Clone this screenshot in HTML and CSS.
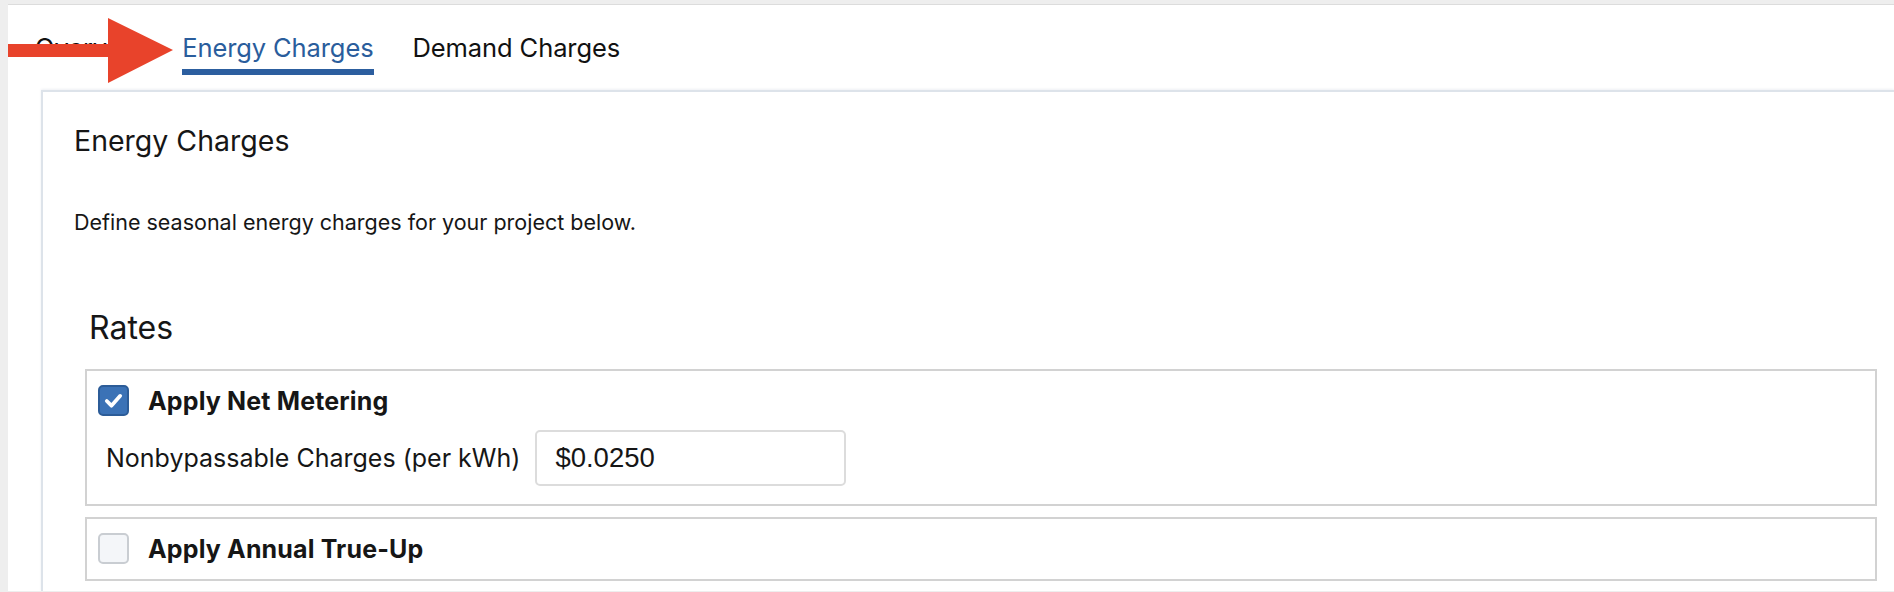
FILE: index.html
```html
<!DOCTYPE html>
<html>
<head>
<meta charset="utf-8">
<link rel="stylesheet" href="styles.css">
</head>
<body>
<div class="window">
  <nav class="tabs">
    <span class="tab">Overview</span>
    <span class="tab active">Energy Charges</span>
    <span class="tab">Demand Charges</span>
  </nav>
  <section class="panel">
    <h2 class="panel-title">Energy Charges</h2>
    <p class="panel-desc">Define seasonal energy charges for your project below.</p>
    <div class="rates">
      <h3 class="rates-title">Rates</h3>
      <div class="rate-box first">
        <div class="check-row">
          <span class="checkbox checked">
            <svg viewBox="0 0 30 30" width="30" height="30"><path d="M8.5 15.5 L13 20 L21.5 10.5" fill="none" stroke="#fff" stroke-width="3.6" stroke-linecap="round" stroke-linejoin="round"/></svg>
          </span>
          <span class="check-label">Apply Net Metering</span>
        </div>
        <div class="field-row">
          <label class="field-label">Nonbypassable Charges (per kWh)</label>
          <div class="input">$0.0250</div>
        </div>
      </div>
      <div class="rate-box">
        <div class="check-row">
          <span class="checkbox"></span>
          <span class="check-label">Apply Annual True-Up</span>
        </div>
      </div>
    </div>
  </section>
</div>
<svg class="arrow" viewBox="0 0 165 65" width="165" height="65">
  <polygon points="0,26 100,26 100,0 165,32 100,65 100,39 0,39" fill="#e8432b"/>
</svg>
</body>
</html>
```

FILE: styles.css
```css
html, body {
  margin: 0;
  padding: 0;
}
body {
  background: #eeeeee;
  font-family: Inter, "Noto Sans", sans-serif;
  color: #161616;
  height: 592px;
  overflow: hidden;
  position: relative;
}
.window {
  margin: 4px 0 0 8px;
  background: #ffffff;
  border-top: 1px solid #dcdcdc;
  height: 587px;
  box-sizing: border-box;
  overflow: hidden;
  display: flex;
  flex-direction: column;
}
.tabs {
  display: flex;
  padding: 27px 0 0 27px;
  height: 58px;
  box-sizing: content-box;
  flex: none;
}
.tab {
  font-size: 25.5px;
  line-height: 32px;
  height: 37px;
  color: #111;
  letter-spacing: -0.1px;
  margin-right: 39px;
}
.tab:first-child {
  margin-right: 34px;
}
.tab.active {
  color: #2a5d9c;
  border-bottom: 6px solid #2c5e9f;
}
.panel {
  margin-left: 33px;
  border-top: 2px solid #dde3ea;
  border-left: 2px solid #dde3ea;
  box-shadow: 0 -1px 2px rgba(120, 140, 170, 0.12);
  padding: 31px 0 0 31px;
  flex: 1;
}
.panel-title {
  margin: 0;
  font-size: 28.5px;
  line-height: 36px;
  font-weight: 400;
  color: #161616;
}
.panel-desc {
  margin: 49px 0 0 0;
  font-size: 21.5px;
  line-height: 28px;
  color: #161616;
}
.rates {
  margin: 72px 17px 0 11px;
}
.rates-title {
  margin: 0 0 21px 4px;
  font-size: 32px;
  line-height: 40px;
  font-weight: 400;
  color: #161616;
}
.rate-box {
  border: 2px solid #d2d2d2;
  padding: 14px 11px 15px 11px;
  margin-bottom: 11px;
  display: flex;
  flex-direction: column;
  gap: 14px;
}
.rate-box.first {
  padding-bottom: 18px;
}
.check-row {
  display: flex;
  align-items: center;
  gap: 19px;
}
.checkbox {
  width: 31px;
  height: 31px;
  box-sizing: border-box;
  border-radius: 5px;
  border: 2px solid #c9cdd2;
  background: #f4f6f9;
  display: block;
  flex: none;
}
.checkbox.checked {
  border-color: #2c5c98;
  background: #3b72b6;
}
.checkbox svg {
  display: block;
  margin: -2px;
  width: 31px;
  height: 31px;
}
.check-label {
  font-size: 25px;
  font-weight: 700;
  line-height: 30px;
  letter-spacing: 0.15px;
  color: #161616;
}
.field-row {
  display: flex;
  align-items: center;
  gap: 15px;
  padding-left: 8px;
}
.field-label {
  font-size: 25px;
  line-height: 32px;
  color: #161616;
}
.input {
  width: 311px;
  height: 56px;
  box-sizing: border-box;
  border: 2px solid #dcdcdc;
  border-radius: 5px;
  padding-left: 18px;
  font-family: "Liberation Sans", Arial, sans-serif;
  font-size: 27.5px;
  line-height: 52px;
  color: #161616;
}
.arrow {
  position: absolute;
  left: 8px;
  top: 18px;
}
```
